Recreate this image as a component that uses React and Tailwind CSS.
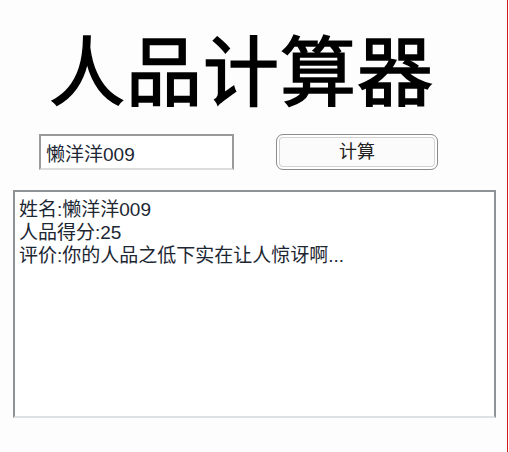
export default function App() {
  const font = { fontFamily: '"Liberation Sans", "Noto Sans CJK SC", sans-serif' }
  return (
    <div className="w-[509px] h-[452px] bg-white flex" style={font}>
      <div className="w-[508px] h-full border-r border-[#d61a1a] bg-[#fdfdfd] flex flex-col">
        <h1 className="pl-[49px] pt-[36px] text-[76px] leading-none font-normal text-black tracking-[1px] [-webkit-text-stroke:1.5px_black]">
          人品计算器
        </h1>
        <div className="flex items-center mt-[22px]">
          <input
            readOnly
            value="懒洋洋009"
            className="ml-[39px] w-[195px] h-[36px] border-2 border-[#9a9a9a] border-b-[#dcdcdc] bg-white px-[5px] text-[19px] text-[#1c2733] outline-none"
            style={font}
          />
          <button
            className="ml-[42px] w-[162px] h-[36px] rounded-[7px] border border-[#8c8c8c] bg-[#fbfbfb] shadow-[inset_0_0_0_2px_#ffffff,inset_0_0_0_3px_#d2d2d2] text-[18px] text-[#222]"
            style={font}
          >
            计算
          </button>
        </div>
        <div className="ml-[13px] mt-[20px] w-[483px] h-[228px] border-2 border-[#8e9397] border-b-[#dde1e3] bg-white px-[4px] pt-[6px] text-[19px] leading-[23px] text-[#1c2733]">
          <div>姓名:懒洋洋009</div>
          <div>人品得分:25</div>
          <div>评价:你的人品之低下实在让人惊讶啊...</div>
        </div>
      </div>
    </div>
  )
}
